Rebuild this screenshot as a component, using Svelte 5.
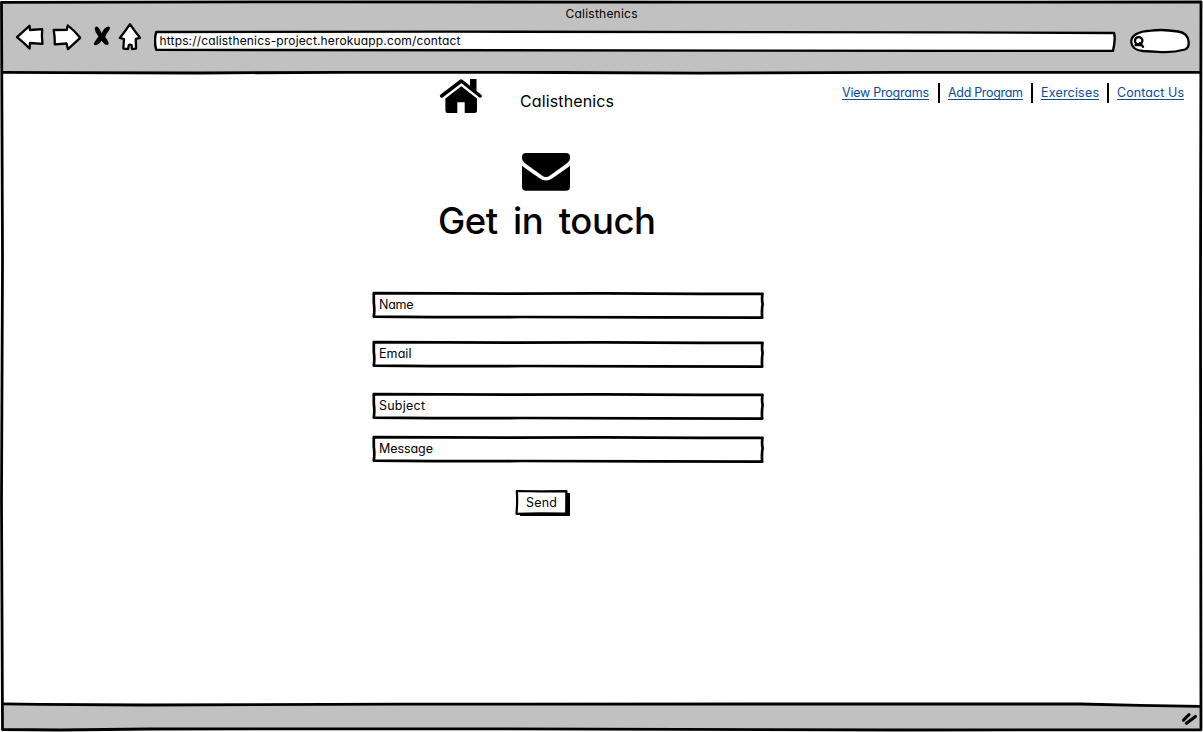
<script>
  const links = [
    { label: 'View Programs', width: 87 },
    { label: 'Add Program', width: 75 },
    { label: 'Exercises', width: 58 },
    { label: 'Contact Us', width: 67 }
  ];
  const fields = [
    { label: 'Name', width: 34.5 },
    { label: 'Email', width: 32.5 },
    { label: 'Subject', width: 46 },
    { label: 'Message', width: 54 }
  ];

  // Spreads the letters of a label over the given width.
  function fit(node, width) {
    const natural = node.getBoundingClientRect().width;
    const step = (width - natural) / (node.textContent.length - 1);
    node.style.letterSpacing = `${step}px`;
    node.style.marginRight = `${-step}px`;
  }
</script>

<div class="window">
  <svg class="frame" viewBox="0 0 1203 732" aria-hidden="true">
    <path class="bar" d="M3 3L1200 3L1200.5 72.5L650 73L400 72L200 73L3 72Z" />
    <path class="bar" d="M3 704L150 705L600 704L1050 704L1200 706.5L1201 730L700 729L200 729.5L3 729Z" />
    <path class="line" d="M2 2.3L300 1.8L700 2.2L1201 2L1200.5 300L1201 729.8L900 730L500 728.8L150 729L60 730L2.5 729.5L1.5 500L2.5 260L1.5 2.3" />
    <path class="line" d="M3 72.3L60 72.7L200 73L340 72.3L560 72.5L700 73.2L900 72.4L1200 72.3" />
    <path class="line" d="M3 703.8L40 704.4L145 705L400 704.2L800 704L1080 704L1140 705.3L1200 706.3" />
  </svg>

  <header class="chrome">
    <div class="title"><span use:fit={72}>Calisthenics</span></div>
    <div class="toolbar">
      <svg class="tools" viewBox="0 0 154 40">
        <g class="arrow">
          <path d="M17 17.2L29.5 5.8L30 10L42.2 9.2Q41.5 16 42.5 23.8L30 23L29.6 28.5Q23 22 17 17.2Z" />
          <path d="M53.7 10L66.8 9.8L67.8 5.3Q74 10 80.2 17.8L68 29.2L66.5 23.5L54.8 24.3Q55 17 53.7 10Z" />
          <path d="M130 4.2Q134 10.5 140 17.8L135.8 18.8L136 28.6L132 29L131.6 25.2Q129.8 24 128.8 25.2L128 29L123.3 28.6L124 19L119.8 18Q125.5 11 130 4.2Z" />
        </g>
        <path class="cross" d="M94.6 8.2Q96.5 5 99 8.3L101.8 13.2Q104 7.5 108.3 6.6Q111 7 109.3 10Q106.5 13.5 105.2 17Q108 20.5 108.8 23Q108.5 26 105 24.6L101.5 20.8Q98.5 25.2 95 25.2Q92.7 24.5 94.6 22L98.4 16.5Q95 12.5 94.6 8.2Z" />
      </svg>
      <div class="address">
        <svg viewBox="0 0 962 23" aria-hidden="true"><path d="M2.2 3L300 2.6L800 3.4L960 4Q961.8 10 959 22L600 21.6L2.2 20.8Q-.2 12 2.2 3Z" /></svg>
        <span use:fit={301}>https://calisthenics-project.herokuapp.com/contact</span>
      </div>
      <svg class="search" viewBox="0 0 62 26">
        <path d="M22 2.6Q34 1 49 3.5Q59 5 59.7 14Q60 20 56 21.5Q43 25 29 23.8L14 23Q3 22 2.2 14Q2 4 22 2.6Z" />
        <circle cx="9.7" cy="12.8" r="3.7" />
        <path d="M11 15L14 18.8M6.5 17H12" />
      </svg>
    </div>
  </header>

  <main>
    <div class="top">
      <svg class="home" viewBox="0 0 44 36">
        <path class="roof" d="M2.6 18L22.3 3L41.2 18" />
        <path d="M31 1H37.5V14L31 9Z" />
        <path d="M22.3 8.2L38 20.5V32.5Q38 35 35.5 35H25.7V24.3H18.3V35H8.5Q6.4 35 6.4 32.5V20.5Z" />
      </svg>
      <span class="brand"><span use:fit={94}>Calisthenics</span></span>
      <nav>
        {#each links as link}
          <a href="#top"><span use:fit={link.width}>{link.label}</span></a>
        {/each}
      </nav>
    </div>

    <section class="intro">
      <svg class="mail" viewBox="0 0 48 38">
        <path d="M4 0H44Q48 0 48 4V5Q48 8 44 11L28 22.5Q24 25.5 20 22.5L4 11Q0 8 0 5V4Q0 0 4 0Z" />
        <path d="M0 12.5Q1 14 18 25.5Q24 29.5 30 25.5Q47 14 48 12.5V34Q48 37.7 44 37.7H4Q0 37.7 0 34Z" />
      </svg>
      <h1><span use:fit={218}>Get in touch</span></h1>
    </section>

    <form>
      {#each fields as field}
        <div class="field">
          <svg viewBox="0 0 392 28" aria-hidden="true">
            <path d="M1.8 2.2L70 2.3L140 2.7L230 2.3L330 2.9L390.5 2.8Q389.6 8 390.6 13Q389.5 20 390.2 26.6L280 26.4L150 26L60 26.2L1.8 25.6Q2.8 18 1.8 12Z" />
          </svg>
          <span use:fit={field.width}>{field.label}</span>
        </div>
      {/each}
      <button type="button">
        <svg viewBox="0 0 56 28" aria-hidden="true">
          <path class="shade" d="M50 4H55V27H5V23Z" />
          <path class="face" d="M1.8 2L25 2.4L51.4 2.1L51.2 24.6L25 24.4L1.5 24.8Q2.6 12 1.8 2Z" />
        </svg>
        <span use:fit={31}>Send</span>
      </button>
    </form>
  </main>

  <footer>
    <svg viewBox="0 0 18 16"><path d="M2.5 9.2L8 3.6M5.5 12.2L14.5 5.5" /></svg>
  </footer>
</div>

<style>
  :global(body) { margin: 0; background: #fff; }
  .window {
    position: relative;
    width: 1203px;
    height: 732px;
    box-sizing: border-box;
    display: grid;
    grid-template-rows: 74px 630px 28px;
    font-family: Inter, "Open Sans", sans-serif;
    font-feature-settings: "cv11", "ss03";
    font-size: 12.5px;
    line-height: 18px;
    color: #000;
    overflow: hidden;
  }
  span { display: inline-block; white-space: nowrap; }
  svg { display: block; stroke-linejoin: round; stroke-linecap: round; }
  .frame { position: absolute; inset: 0; width: 1203px; height: 732px; }
  .frame path { fill: none; }
  .frame .bar { fill: #c1c1c1; }
  .frame .line { stroke: #000; stroke-width: 2.8; }
  .chrome, main, footer { position: relative; }
  .title { padding-top: 5px; height: 14px; text-align: center; font-size: 12px; }
  .toolbar { display: flex; align-items: flex-start; }
  .tools { width: 154px; height: 40px; flex: none; margin-top: 1px; }
  .arrow { fill: #fff; stroke: #000; stroke-width: 2.3; }
  .cross { fill: #000; }
  .address {
    position: relative;
    width: 962px;
    height: 23px;
    margin-top: 10px;
    padding-left: 5.5px;
    box-sizing: border-box;
    line-height: 23px;
    font-size: 12px;
  }
  .address svg, .field svg, button svg { position: absolute; inset: 0; width: 100%; height: 100%; }
  .address path, .field path { fill: #fff; stroke: #000; stroke-width: 2.4; }
  .address span, .field span, button span { position: relative; }
  .search { width: 62px; height: 26px; margin: 9px 0 0 13px; fill: #fff; stroke: #000; stroke-width: 2.3; }
  .top { display: flex; align-items: flex-start; height: 79px; }
  .home { width: 44px; height: 36px; margin: 4px 0 0 439px; }
  .roof { fill: none; stroke: #000; stroke-width: 3.5; }
  .brand { width: 94px; margin: 18px 0 0 37px; font-size: 16px; }
  nav { display: flex; margin: 9px 0 0 228px; }
  nav a { display: block; height: 20px; color: #0b4d92; text-decoration: none; }
  nav a span { height: 17px; line-height: 20px; box-sizing: border-box; border-bottom: 1px solid #0b4d92; }
  nav a + a { margin-left: 9px; padding-left: 8px; border-left: 2px solid #000; }
  nav a:nth-child(n + 3) { margin-left: 8px; }
  .intro { width: 217px; margin-left: 438px; height: 138px; }
  .mail { width: 48px; height: 38px; margin-left: 84px; }
  h1 { margin: 9px 0 0; font-size: 36.5px; line-height: 42px; font-weight: 450; word-spacing: 6px; }
  form { margin-left: 372px; width: 392px; display: flex; flex-direction: column; }
  .field {
    position: relative;
    height: 28px;
    padding-left: 7px;
    box-sizing: border-box;
    line-height: 28px;
    margin-bottom: 21px;
  }
  .field:nth-child(2) { margin-bottom: 24px; }
  .field:nth-child(3) { margin-bottom: 15px; }
  .field:nth-child(4) { margin-bottom: 26px; }
  .field path { stroke-width: 2.7; }
  button {
    position: relative;
    width: 56px;
    height: 28px;
    margin-left: 143px;
    padding: 0 0 0 11px;
    border: 0;
    background: none;
    font: inherit;
    font-feature-settings: inherit;
    color: inherit;
    text-align: left;
  }
  .face { fill: #fff; stroke: #000; stroke-width: 2.2; }
  footer { display: flex; justify-content: flex-end; padding: 7px 4px 0 0; }
  footer svg { width: 18px; height: 16px; fill: none; stroke: #000; stroke-width: 3.2; }
</style>
